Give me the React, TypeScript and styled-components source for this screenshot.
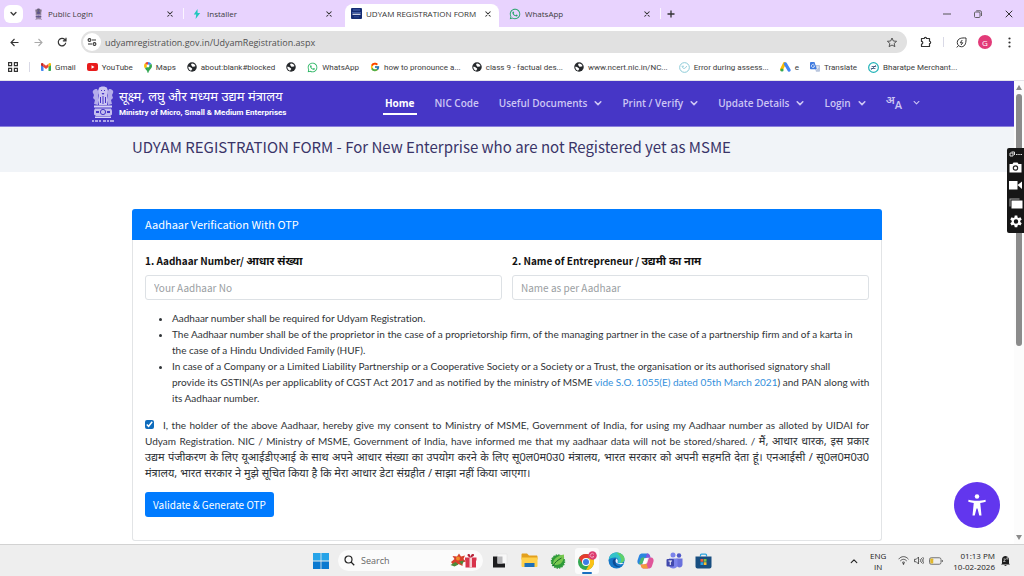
import React from "react";
import styled, { createGlobalStyle, css } from "styled-components";
import { FcGoogle } from "react-icons/fc";
import { FaWhatsapp } from "react-icons/fa";

const uiFont = `"Open Sans", "Noto Sans", sans-serif`;
const pageFont = `"Noto Sans CJK SC", "Noto Sans", sans-serif`;

const GlobalStyle = createGlobalStyle`
  *, *::before, *::after { box-sizing: border-box; }
  body { margin: 0; background: #fff; font-family: ${uiFont}; color: #3c3c3c; }
  button, input { font: inherit; color: inherit; }
  button { cursor: pointer; }
  a { color: inherit; text-decoration: none; }
  svg { display: block; flex: none; }
`;

const Screen = styled.div`
  min-height: 100vh;
  display: flex;
  flex-direction: column;
`;

/* ---------- browser chrome ---------- */

const TabStrip = styled.div`
  display: flex;
  align-items: center;
  height: 27px;
  padding-left: 4px;
  background: #e8d3fe;
`;

const PlainButton = styled.button`
  display: flex;
  align-items: center;
  justify-content: center;
  flex: none;
  padding: 0;
  border: 0;
  background: none;
`;

const TabSearch = styled(PlainButton)`
  width: 19px;
  height: 18px;
  margin-right: 4px;
  border-radius: 6px;
  background: #fff;
`;

const Tab = styled.div<{ $active?: boolean }>`
  display: flex;
  align-items: center;
  gap: 4px;
  flex: 0 1 154px;
  min-width: 0;
  height: 23px;
  margin-top: 4px;
  padding: 0 8px 4px 5px;
  font-size: 8px;
  border-radius: 8px 8px 0 0;
  ${(p) => p.$active && css`background: #fff; color: #333;`}
`;

const TabIcon = styled.span`
  display: flex;
  justify-content: center;
  flex: none;
  width: 12px;
`;

const TabTitle = styled.button`
  flex: 1;
  min-width: 0;
  padding: 0;
  border: 0;
  background: none;
  overflow: hidden;
  white-space: nowrap;
  text-align: left;
`;

const TabGap = styled.span<{ $line?: boolean }>`
  width: 3px;
  height: 11px;
  margin-left: 2px;
  border-left: 1px solid ${(p) => (p.$line ? "#fbf5ff" : "transparent")};
`;

const NewTab = styled(PlainButton)`
  width: 16px;
  height: 18px;
`;

const WindowButtons = styled.div`
  display: flex;
  margin-left: auto;
`;

const WindowButton = styled(PlainButton)`
  width: 31px;
  height: 26px;
`;

const Toolbar = styled.div`
  display: flex;
  align-items: center;
  height: 30px;
  padding: 0 3px 0 2px;
  background: #fff;
`;

const ToolButton = styled(PlainButton)`
  width: 24px;
  height: 22px;
`;

const AddressBar = styled.div`
  display: flex;
  align-items: center;
  flex: 1;
  height: 22px;
  margin: 0 7px;
  padding: 0 4px 0 2px;
  border-radius: 11px;
  background: #e1e1e1;
`;

const SiteInfo = styled(PlainButton)`
  width: 18px;
  height: 18px;
  border-radius: 9px;
  background: #fff;
`;

const AddressInput = styled.input`
  flex: 1;
  min-width: 0;
  padding: 0 4px;
  border: 0;
  outline: 0;
  background: none;
  font-size: 9px;
  color: #505050;
`;

const Divider = styled.span`
  width: 1px;
  height: 10px;
  background: #d9d9e6;
`;

const ToolDivider = styled(Divider)`
  margin: 0 5px;
`;

const Avatar = styled(PlainButton)`
  width: 14px;
  height: 14px;
  margin: 0 5px;
  border-radius: 7px;
  background: #e23a78;
  color: #fff;
  font-size: 8px;
`;

const BookmarkBar = styled.nav`
  display: flex;
  align-items: center;
  gap: 11px;
  height: 24px;
  padding: 0 8px 3px;
  border-bottom: 1px solid #e4e4ea;
  background: #fff;
  font-family: Roboto, sans-serif;
  font-size: 8px;
`;

const Bookmark = styled.a`
  display: flex;
  align-items: center;
  gap: 4px;
  white-space: nowrap;
`;

/* ---------- web page ---------- */

const Viewport = styled.div`
  position: relative;
  display: flex;
  flex: 1;
`;

const Page = styled.div`
  flex: 1;
  min-width: 0;
  display: flex;
  flex-direction: column;
  font-family: ${pageFont};
`;

const SiteHeader = styled.header`
  background: #4636c6;
  border-bottom: 1px solid #8a80dc;
`;

const HeaderInner = styled.div`
  display: flex;
  align-items: center;
  justify-content: space-between;
  max-width: 832px;
  height: 45px;
  margin: 0 auto;
`;

const Brand = styled.a`
  display: flex;
  align-items: center;
  gap: 4px;
  color: #fff;
`;

const BrandText = styled.span`
  display: flex;
  flex-direction: column;
  white-space: nowrap;
`;

const BrandHindi = styled.span`
  font-family: "Noto Sans", sans-serif;
  font-size: 13px;
  line-height: 18px;
`;

const BrandEnglish = styled.span`
  font-family: Roboto, sans-serif;
  font-size: 8px;
  font-weight: 700;
  line-height: 16px;
`;

const Nav = styled.nav`
  display: flex;
  align-items: center;
  gap: 16px;
  padding-right: 1px;
  font-family: ${uiFont};
  font-size: 10px;
  font-weight: 600;
`;

const NavLink = styled.a<{ $active?: boolean }>`
  display: flex;
  align-items: center;
  gap: 7px;
  height: 22px;
  padding: 0 2px;
  color: ${(p) => (p.$active ? "#fff" : "#cdc6f4")};
  font-weight: ${(p) => (p.$active ? 700 : 600)};
  white-space: nowrap;
  border-bottom: 2px solid ${(p) => (p.$active ? "#fff" : "transparent")};
`;

const LanguageMark = styled.span`
  display: flex;
  align-items: flex-end;
  height: 16px;
  margin-right: 4px;
  font-size: 11px;
  line-height: 12px;
`;

const LanguageHindi = styled.span`
  align-self: flex-start;
  line-height: 10px;
`;

const TitleBand = styled.div`
  background: #f1f4f8;
`;

const Container = styled.div`
  max-width: 750px;
  margin: 0 auto;
`;

const PageTitle = styled.h1`
  margin: 0;
  padding-bottom: 6px;
  font-size: 15px;
  font-weight: 400;
  line-height: 39px;
  color: #3a3468;
`;

const Main = styled.main`
  flex: 1;
  padding: 37px 0 2px;
`;

const Card = styled.section`
  border-radius: 3px;
`;

const CardHeader = styled.h2`
  margin: 0;
  padding: 0 13px;
  border-radius: 3px 3px 0 0;
  font-size: 11px;
  font-weight: 400;
  line-height: 31px;
  background: #007bff;
  color: #fff;
`;

const CardBody = styled.form`
  padding: 13px 12px 23px;
  border: 1px solid #e2e4e6;
  border-top: 0;
  border-radius: 0 0 3px 3px;
  font-size: 10px;
  line-height: 16px;
  color: #2f3337;
`;

const Fields = styled.div`
  display: grid;
  grid-template-columns: 1fr 1fr;
  gap: 10px;
`;

const Field = styled.div`
  display: flex;
  flex-direction: column;
  gap: 6px;
`;

const Label = styled.label`
  font-weight: 700;
  line-height: 16px;
  color: #111;
`;

const Hindi = styled.span`
  font-family: "Noto Sans", sans-serif;
  font-size: 11px;
`;

const TextInput = styled.input`
  width: 100%;
  height: 25px;
  padding: 0 8px;
  border: 1px solid #dde1e5;
  border-radius: 3px;
  background: #fff;
  &::placeholder { color: #9a9ea2; opacity: 1; }
`;

const Notes = styled.ul`
  margin: 10px -5px 11px 0;
  padding: 0 0 0 27px;
  font-family: Lato, sans-serif;
  font-variant-ligatures: none;
`;

const NoteLink = styled.a`
  color: #3490dc;
`;

const Consent = styled.label`
  display: block;
  font-family: Lato, sans-serif;
  font-variant-ligatures: none;
  text-align: justify;
`;

const Check = styled.input`
  width: 9px;
  height: 9px;
  margin: 0 9px 0 0;
  accent-color: #0f6cbd;
`;

const Submit = styled.button`
  display: block;
  height: 25px;
  margin-top: 11px;
  padding: 0 8px;
  border: 0;
  border-radius: 3px;
  background: #007bff;
  color: #fff;
`;

const ScrollTrack = styled.div`
  display: flex;
  flex-direction: column;
  align-items: center;
  justify-content: space-between;
  width: 10px;
  padding: 4px 0;
  background: #fcfcfc;
`;

const ScrollThumb = styled.div`
  width: 6px;
  height: 252px;
  margin: 4px 0 auto;
  border-radius: 3px;
  background: #8b8b8b;
`;

const CapturePanel = styled.div`
  position: absolute;
  top: 67px;
  right: 0;
  display: flex;
  flex-direction: column;
  align-items: center;
  gap: 5px;
  width: 17px;
  padding: 3px 0 4px;
  border-radius: 2px 0 0 2px;
  background: #161616;
`;

const AccessButton = styled(PlainButton)`
  position: absolute;
  right: 24px;
  bottom: 16px;
  width: 46px;
  height: 46px;
  border-radius: 50%;
  background: #6236ee;
`;

/* ---------- taskbar ---------- */

const Taskbar = styled.footer`
  display: grid;
  grid-template-columns: 1fr auto 1fr;
  align-items: center;
  height: 32px;
  border-top: 1px solid #d2d2d2;
  background: #eeeeee;
`;

const TaskIcons = styled.div`
  grid-column: 2;
  display: flex;
  align-items: center;
  gap: 5px;
`;

const TaskButton = styled(PlainButton)<{ $active?: boolean }>`
  position: relative;
  width: 24px;
  height: 26px;
  border-radius: 3px;
  ${(p) =>
    p.$active &&
    css`
      background: #fbfbfb;
      &::after {
        content: "";
        position: absolute;
        bottom: 0;
        left: 7px;
        right: 7px;
        height: 2px;
        border-radius: 1px;
        background: #1a6fc0;
      }
    `}
`;

const SearchBox = styled.label`
  display: flex;
  align-items: center;
  gap: 6px;
  width: 145px;
  height: 21px;
  padding: 0 6px;
  border-radius: 11px;
  background: #fbfbfb;
`;

const SearchInput = styled.input`
  flex: 1;
  min-width: 0;
  padding: 0;
  border: 0;
  outline: 0;
  background: none;
  font-size: 9px;
  &::placeholder { color: #666; opacity: 1; }
`;

const Tray = styled.div`
  display: flex;
  align-items: center;
  justify-content: flex-end;
  padding-right: 14px;
  font-size: 8px;
  line-height: 11px;
  color: #222;
`;

const Language = styled.div`
  margin: 0 12px;
  text-align: center;
`;

const Status = styled.div`
  display: flex;
  align-items: center;
  gap: 5px;
`;

const Clock = styled.time`
  margin: 0 6px 0 10px;
  text-align: right;
`;

/* ---------- icons ---------- */

const Chevron = ({ size = 8, up = false, w = 2 }: { size?: number; up?: boolean; w?: number }) => (
  <svg width={size} height={size} viewBox="0 0 10 10" fill="none" stroke="currentColor" strokeWidth={w} strokeLinecap="round" strokeLinejoin="round">
    <path d={up ? "M1.5 7 5 3.5 8.500 7" : "M1.500 3.500 5 7 8.500 3.500"} />
  </svg>
);

const Cross = ({ size = 7, w = 1.4 }: { size?: number; w?: number }) => (
  <svg width={size} height={size} viewBox="0 0 8 8" stroke="#333" strokeWidth={w} strokeLinecap="round">
    <path d="M1 1l6 6M7 1 1 7" />
  </svg>
);

const Emblem = ({ width, height, color }: { width: number; height: number; color: string }) => (
  <svg width={width} height={height} viewBox="0 0 24 38" fill={color}>
    <path d="M8 3c1-2 7-2 8 0l1 3-1 3 1 6-1 5H8l-1-5 1-6-1-3z" opacity=".9" />
    <path d="M6 4c-3 0-5 2-4 4l1 2-1 3 2 2-1 4 4 1V11l1-3z" opacity=".75" />
    <path d="M18 4c3 0 5 2 4 4l-1 2 1 3-2 2 1 4-4 1V11l-1-3z" opacity=".75" />
    <path d="M10 5h1v1h-1zM13 5h1v1h-1zM10.500 8h3l-1.500 2zM9 12h1v6H9zM14 12h1v6h-1zM11.500 11h1v8h-1z" fill="#4636c6" />
    <path d="M3 20.500h18v2H3zM4 31.500h16v1.500H4z" />
    <path d="M4 23.500h16l1 2v4l-2 1.500H5L3 29.500v-4z" opacity=".85" />
    <circle cx="12" cy="27" r="2.600" fill="none" stroke="#4636c6" strokeWidth="1" />
    <path d="M5 26h3v2H5zM16 26h3v2h-3z" fill="#4636c6" />
    <path d="M1 36h2M4 36h3M8 36h2M12 36h3M16 36h2M19 36h4" stroke={color} strokeWidth="1.800" opacity=".7" />
  </svg>
);

const Bolt = () => (
  <svg width="8" height="10" viewBox="0 0 8 10"><path d="M4.500 0 .8 5.500h2.400L2.600 10 7.200 3.900H4.600z" fill="#22c7bd" /></svg>
);

const MsmeIcon = () => (
  <svg width="11" height="11" viewBox="0 0 11 11">
    <rect width="11" height="11" rx="1" fill="#152c72" />
    <path d="M2 2h7M1 4.700h9" stroke="#5b79c4" strokeWidth=".8" />
    <path d="M1.500 6.300h8" stroke="#e8ecf8" strokeWidth="1.100" />
    <path d="M3 8.800h5" stroke="#3b57a5" strokeWidth=".7" />
  </svg>
);

const Globe = () => (
  <svg width="10" height="10" viewBox="0 0 20 20">
    <circle cx="10" cy="10" r="9.500" fill="#25282b" />
    <path d="M2.500 9.500c2.500-.3 4.500.3 5.500 1.800.8 1.300 2.600.9 2.400 2.800-.1 1.300-1.600 1.400-2.100 3.300C4.800 16.600 2.400 13.200 2.500 9.500zM10.500 3c2.300.2 4.300 1.400 5.500 3.200 1.400 2.300.6 3-1.600 2.900-1.700-.1-2 .9-3.400.4-1.300-.5-.7-1.700-2-2.300C7.600 6.500 8 3.200 10.500 3z" fill="#fff" />
  </svg>
);

const GridIcon = () => (
  <svg width="10" height="10" viewBox="0 0 10 10" fill="none" stroke="#333" strokeWidth="1.200">
    <path d="M.6.600h3v3h-3zM6.400.600h3v3h-3zM.6 6.400h3v3h-3zM6.400 6.400h3v3h-3z" />
  </svg>
);

const Gmail = () => (
  <svg width="10" height="8" viewBox="0 0 20 16">
    <path d="M0 3v11.500C0 15.300.7 16 1.500 16H5V6z" fill="#4285f4" />
    <path d="M20 3v11.500c0 .8-.7 1.500-1.500 1.500H15V6z" fill="#34a853" />
    <path d="M5 1.500V8l5 4 5-4V1.500l-5 4z" fill="#ea4335" />
    <path d="M0 2.500v2L5 8V1.600L3.600.6C2-.5 0 .6 0 2.500z" fill="#c5221f" />
    <path d="M20 2.500v2L15 8V1.600L16.400.6C18-.5 20 .6 20 2.500z" fill="#fbbc04" />
  </svg>
);

const YouTube = () => (
  <svg width="11" height="8" viewBox="0 0 22 16"><rect width="22" height="16" rx="4" fill="#e81c1c" /><path d="M9 4.500v7l6-3.500z" fill="#fff" /></svg>
);

const MapPin = () => (
  <svg width="8" height="11" viewBox="0 0 16 22">
    <path d="M8 0a8 8 0 0 0-6 2.700L8 8z" fill="#ea4335" />
    <path d="M8 0v8l6.500-4.500A8 8 0 0 0 8 0z" fill="#4285f4" />
    <path d="M2 2.700C-.8 6-.3 10 2 13l6-5z" fill="#fbbc04" />
    <path d="M14.500 3.500 2 13c3 3.500 4.500 5 5.300 8.400.2.800 1.200.8 1.400 0C10 16 16 13.500 16 8c0-1.700-.6-3.200-1.500-4.500z" fill="#34a853" />
    <circle cx="8" cy="8" r="2.800" fill="#fff" />
  </svg>
);

const RoundMark = ({ color }: { color: string }) => (
  <svg width="11" height="11" viewBox="0 0 22 22" fill="none">
    <circle cx="11" cy="11" r="9.700" stroke={color} strokeWidth="2" />
    <path d="M6 8.500h3M7 11c2 3 5 3 8-2" stroke={color} strokeWidth="2" strokeLinecap="round" />
  </svg>
);

const BharatPe = () => (
  <svg width="11" height="11" viewBox="0 0 22 22" fill="none">
    <circle cx="11" cy="11" r="9.700" stroke="#22b3b8" strokeWidth="2.400" />
    <path d="M8 9h7.500M6.500 13H14M15 7l-8 8" stroke="#274a72" strokeWidth="1.500" strokeLinecap="round" />
  </svg>
);

const Ads = () => (
  <svg width="11" height="10" viewBox="0 0 22 20">
    <path d="M9 3 3 15" stroke="#fbbc04" strokeWidth="6" strokeLinecap="round" />
    <path d="m11 4 7 12" stroke="#4285f4" strokeWidth="6.500" strokeLinecap="round" />
    <circle cx="4" cy="16" r="3.200" fill="#34a853" />
  </svg>
);

const TranslateIcon = () => (
  <svg width="10" height="10" viewBox="0 0 20 20">
    <path d="M8 6h10.500c.8 0 1.500.7 1.500 1.500V18c0 .8-.7 1.500-1.500 1.500H12z" fill="#b9c6de" />
    <path d="M1.500 0H9l4.500 14.500H1.500C.7 14.500 0 13.800 0 13V1.500C0 .7.7 0 1.500 0z" fill="#3f7be0" />
    <path d="M8.800 6.200A3.200 3.200 0 1 0 9.200 8H6.500M13 10h5M15.500 9v1.500c0 2-1.500 4-3 5" stroke="#fff" strokeWidth="1.300" fill="none" />
  </svg>
);

const PanelHandle = () => (
  <svg width="13" height="6" viewBox="0 0 26 12" fill="none" stroke="#ddd" strokeWidth="2">
    <path d="M2 4h6v6H2zM5 2h6v6M14 7h3M18.500 7h3M23 7h3" />
  </svg>
);

/* ---------- data ---------- */

const tabs = [
  { title: "Public Login", icon: <Emblem width={9} height={12} color="#5c5560" />, divider: true },
  { title: "Installer", icon: <Bolt /> },
  { title: "UDYAM REGISTRATION FORM", icon: <MsmeIcon />, active: true },
  { title: "WhatsApp", icon: <FaWhatsapp size={12} color="#25a56a" />, divider: true },
];

const bookmarks = [
  { icon: <Gmail />, text: "Gmail" },
  { icon: <YouTube />, text: "YouTube" },
  { icon: <MapPin />, text: "Maps" },
  { icon: <Globe />, text: "about:blank#blocked" },
  { icon: <Globe />, text: "" },
  { icon: <FaWhatsapp size={11} color="#25b35f" />, text: "WhatsApp" },
  { icon: <FcGoogle size={10} />, text: "how to pronounce a..." },
  { icon: <Globe />, text: "class 9 - factual des..." },
  { icon: <Globe />, text: "www.ncert.nic.in/NC..." },
  { icon: <RoundMark color="#8ccbd8" />, text: "Error during assess..." },
  { icon: <Ads />, text: "e" },
  { icon: <TranslateIcon />, text: "Translate" },
  { icon: <BharatPe />, text: "Bharatpe Merchant..." },
];

const navItems = [
  { text: "Home", active: true },
  { text: "NIC Code" },
  { text: "Useful Documents", menu: true },
  { text: "Print / Verify", menu: true },
  { text: "Update Details", menu: true },
  { text: "Login", menu: true },
];

function BrowserChrome() {
  return (
    <>
      <TabStrip>
        <TabSearch aria-label="Search tabs"><Chevron size={7} /></TabSearch>
        {tabs.map((t) => (
          <React.Fragment key={t.title}>
            <Tab $active={t.active}>
              <TabIcon>{t.icon}</TabIcon>
              <TabTitle>{t.title}</TabTitle>
              <PlainButton aria-label="Close tab"><Cross size={6} /></PlainButton>
            </Tab>
            <TabGap $line={t.divider} />
          </React.Fragment>
        ))}
        <NewTab aria-label="New tab">
          <svg width="8" height="8" viewBox="0 0 8 8" stroke="#333" strokeWidth="1.300"><path d="M4 .5v7M.5 4h7" /></svg>
        </NewTab>
        <WindowButtons>
          <WindowButton aria-label="Minimize"><svg width="8" height="8" viewBox="0 0 8 8"><path d="M0 4h8" stroke="#555" /></svg></WindowButton>
          <WindowButton aria-label="Restore">
            <svg width="8" height="8" viewBox="0 0 16 16" fill="none" stroke="#555" strokeWidth="1.800"><rect x="1" y="4" width="11" height="11" rx="2" /><path d="M4.500 1.500H12a3 3 0 0 1 3 3V12" /></svg>
          </WindowButton>
          <WindowButton aria-label="Close"><Cross size={8} w={1} /></WindowButton>
        </WindowButtons>
      </TabStrip>
      <Toolbar>
        <ToolButton aria-label="Back">
          <svg width="9" height="9" viewBox="0 0 18 18" fill="none" stroke="#333" strokeWidth="2.200"><path d="M17 9H2M9 2 2 9l7 7" /></svg>
        </ToolButton>
        <ToolButton aria-label="Forward">
          <svg width="9" height="9" viewBox="0 0 18 18" fill="none" stroke="#aaa" strokeWidth="2.200"><path d="M1 9h15M9 2l7 7-7 7" /></svg>
        </ToolButton>
        <ToolButton aria-label="Reload">
          <svg width="10" height="10" viewBox="0 0 20 20" fill="none" stroke="#333" strokeWidth="2.400"><path d="M17.500 11.500A7.500 7.500 0 1 1 15.500 5L18 7.500M18 1.500v6.300h-6.300" /></svg>
        </ToolButton>
        <AddressBar>
          <SiteInfo aria-label="Site information">
            <svg width="10" height="8" viewBox="0 0 20 16" fill="none" stroke="#333" strokeWidth="2.200"><circle cx="5" cy="4" r="2.800" /><path d="M10 4h8M2 12h8" /><circle cx="15" cy="12" r="2.800" /></svg>
          </SiteInfo>
          <AddressInput aria-label="Address" defaultValue="udyamregistration.gov.in/UdyamRegistration.aspx" />
          <PlainButton aria-label="Bookmark this page">
            <svg width="22" height="11" viewBox="0 0 44 22" fill="none" stroke="#444" strokeWidth="1.800" strokeLinejoin="round"><path d="m22 2 2.700 6 6.500.6-4.900 4.300 1.500 6.400L22 16l-5.800 3.300 1.500-6.400-4.900-4.300 6.500-.6z" /></svg>
          </PlainButton>
        </AddressBar>
        <ToolButton aria-label="Extensions">
          <svg width="12" height="12" viewBox="0 0 24 24" fill="none" stroke="#333" strokeWidth="2.400" strokeLinejoin="round"><path d="M3 5h5.500a2.300 2.300 0 0 1 4.600 0H19v5.500a2.300 2.300 0 0 1 0 4.600V21H3v-5a2.600 2.600 0 0 0 0-5.200z" /></svg>
        </ToolButton>
        <ToolDivider />
        <ToolButton aria-label="Performance">
          <svg width="11" height="11" viewBox="0 0 22 22" fill="none" stroke="#333" strokeWidth="2"><path d="M20 2c-8-.5-17 0-17.500 9 0 5 4 8.500 8.500 8.500C19 19.500 20.500 10 20 2zM1.500 21 5 17" /><path d="m12.500 6-4 5.500h5L10 16" /></svg>
        </ToolButton>
        <Avatar aria-label="Profile">G</Avatar>
        <ToolButton aria-label="Menu">
          <svg width="3" height="11" viewBox="0 0 3 11" fill="#333"><circle cx="1.500" cy="1.500" r="1.100" /><circle cx="1.500" cy="5.500" r="1.100" /><circle cx="1.500" cy="9.500" r="1.100" /></svg>
        </ToolButton>
      </Toolbar>
      <BookmarkBar aria-label="Bookmarks">
        <PlainButton aria-label="Apps"><GridIcon /></PlainButton>
        <Divider />
        {bookmarks.map((b, i) => (
          <Bookmark href="#" key={i} aria-label={b.text || "Bookmark"}>
            {b.icon}
            {b.text && <span>{b.text}</span>}
          </Bookmark>
        ))}
      </BookmarkBar>
    </>
  );
}

function WebPage() {
  return (
    <Page>
      <SiteHeader>
        <HeaderInner>
          <Brand href="#">
            <Emblem width={24} height={38} color="#d9d5f6" />
            <BrandText>
              <BrandHindi>सूक्ष्म, लघु और मध्यम उद्यम मंत्रालय</BrandHindi>
              <BrandEnglish>Ministry of Micro, Small &amp; Medium Enterprises</BrandEnglish>
            </BrandText>
          </Brand>
          <Nav>
            {navItems.map((n) => (
              <NavLink href="#" key={n.text} $active={n.active}>
                {n.text}
                {n.menu && <Chevron />}
              </NavLink>
            ))}
            <NavLink href="#" aria-label="Language">
              <LanguageMark><LanguageHindi>अ</LanguageHindi>A</LanguageMark>
              <Chevron size={7} w={1.5} />
            </NavLink>
          </Nav>
        </HeaderInner>
      </SiteHeader>
      <TitleBand>
        <Container>
          <PageTitle>UDYAM REGISTRATION FORM - For New Enterprise who are not Registered yet as MSME</PageTitle>
        </Container>
      </TitleBand>
      <Main>
        <Container>
          <Card>
            <CardHeader>Aadhaar Verification With OTP</CardHeader>
            <CardBody onSubmit={(e: React.FormEvent) => e.preventDefault()}>
              <Fields>
                <Field>
                  <Label htmlFor="aadhaar">1. Aadhaar Number/ <Hindi>आधार संख्या</Hindi></Label>
                  <TextInput id="aadhaar" placeholder="Your Aadhaar No" />
                </Field>
                <Field>
                  <Label htmlFor="name">2. Name of Entrepreneur / <Hindi>उद्यमी का नाम</Hindi></Label>
                  <TextInput id="name" placeholder="Name as per Aadhaar" />
                </Field>
              </Fields>
              <Notes>
                <li>Aadhaar number shall be required for Udyam Registration.</li>
                <li>
                  The Aadhaar number shall be of the proprietor in the case of a proprietorship firm, of the managing
                  partner in the case of a partnership firm and of a karta in the&nbsp;case of a Hindu Undivided Family
                  (HUF).
                </li>
                <li>
                  In case of a Company or a Limited Liability Partnership or a Cooperative Society or a Society or a
                  Trust, the organisation or its authorised signatory shall provide&nbsp;its GSTIN(As per applicablity
                  of CGST Act 2017 and as notified by the ministry of MSME{" "}
                  <NoteLink href="#">vide S.O. 1055(E) dated 05th March 2021</NoteLink>) and PAN along with its Aadhaar
                  number.
                </li>
              </Notes>
              <Consent>
                <Check type="checkbox" defaultChecked />
                I, the holder of the above Aadhaar, hereby give my consent to Ministry of MSME, Government of India, for
                using my Aadhaar number as alloted by UIDAI for Udyam Registration. NIC / Ministry of MSME, Government of
                India, have informed me that my aadhaar data will not be stored/shared. /{" "}
                <Hindi>
                  मैं, आधार धारक, इस प्रकार उद्यम&nbsp;पंजीकरण के लिए यूआईडीएआई के साथ अपने आधार संख्या का उपयोग करने के लिए
                  सू0ल0म0उ0 मंत्रालय, भारत सरकार को अपनी सहमति देता हूं। एनआईसी / सू0ल0म0उ0 मंत्रालय, भारत सरकार ने मुझे
                  सूचित किया है कि मेरा आधार डेटा संग्रहीत / साझा नहीं किया जाएगा।
                </Hindi>
              </Consent>
              <Submit>Validate &amp; Generate OTP</Submit>
            </CardBody>
          </Card>
        </Container>
      </Main>
    </Page>
  );
}

function CaptureTools() {
  return (
    <CapturePanel>
      <PanelHandle />
      <PlainButton aria-label="Take photo">
        <svg width="13" height="11" viewBox="0 0 26 22"><path d="M1 4h6l2-3h8l2 3h6v17H1z" fill="#fff" /><circle cx="13" cy="12" r="5.500" fill="#222" /><circle cx="13" cy="12" r="3.200" fill="#fff" /></svg>
      </PlainButton>
      <PlainButton aria-label="Record video">
        <svg width="13" height="14" viewBox="0 0 26 28"><path d="M0 6h17v17H0zM17 14l9-7v15z" fill="#fff" /></svg>
      </PlainButton>
      <PlainButton aria-label="Gallery">
        <svg width="14" height="13" viewBox="0 0 28 26"><path d="M1 3h20v2H3v14H1z" fill="#aaa" /><path d="M5 7h22v16H5z" fill="#fff" /></svg>
      </PlainButton>
      <PlainButton aria-label="Settings">
        <svg width="14" height="14" viewBox="0 0 24 24" fill="#fff"><path fillRule="evenodd" d="m9.800 1-.5 3.100-1.900 1.100-3-1.200-2.200 3.900 2.500 1.900v2.300l-2.500 2 2.200 3.900 3-1.200 1.900 1.100.5 3.100h4.400l.5-3.100 1.900-1.100 3 1.200 2.200-3.900-2.500-2V9.800l2.500-1.900L19.600 4l-3 1.200-1.900-1.100-.5-3.100zM12 7.200a3.800 3.800 0 1 1 0 7.600 3.800 3.800 0 0 1 0-7.600z" /></svg>
      </PlainButton>
    </CapturePanel>
  );
}

function WindowsTaskbar() {
  return (
    <Taskbar>
      <TaskIcons>
        <TaskButton aria-label="Start">
          <svg width="16" height="16" viewBox="0 0 16 16"><path d="M0 0h7.600v7.600H0zM8.400 0H16v7.600H8.400z" fill="#26a3e8" /><path d="M0 8.400h7.600V16H0zM8.400 8.400H16V16H8.400z" fill="#0b79d0" /></svg>
        </TaskButton>
        <SearchBox>
          <svg width="11" height="11" viewBox="0 0 22 22" fill="none" stroke="#222" strokeWidth="2.400"><circle cx="9" cy="9" r="7" /><path d="m14 14 6.500 6.500" /></svg>
          <SearchInput placeholder="Search" aria-label="Search" />
          <svg width="27" height="15" viewBox="0 0 54 30">
            <path d="M2 18 9 12 5 6l9 1 4-6 4 6 8-2-3 7 5 5-7 2v7l-8-4-9 4z" fill="#d8402c" />
            <path d="m1 24 10-6 6 5-8 4zM18 17l10-2-4 9z" fill="#4d8a3a" />
            <circle cx="16" cy="11" r="4" fill="#f08a2a" />
            <path d="M30 9h23v6H30zM31 15h21v14H31z" fill="#d8344c" />
            <path d="M39 9h5v20h-5z" fill="#f5cdd2" />
            <path d="M41 9c-8-2-7-8-3-7 2 0 3 4 3 7 0-3 2-8 5-7 3 0 4 5-5 7z" fill="#b52238" />
          </svg>
        </SearchBox>
        <TaskButton aria-label="Task view">
          <svg width="16" height="16" viewBox="0 0 32 32"><path d="M10 2h20v20H10z" fill="#f8f8f8" stroke="#ddd" /><path d="M2 7h9v14h15v8H2z" fill="#1d1d1f" /><path d="M11 7h10v14H11z" fill="#b9b9bb" /></svg>
        </TaskButton>
        <TaskButton aria-label="File Explorer">
          <svg width="17" height="15" viewBox="0 0 34 30"><path d="M1 3c0-1 1-2 2-2h9l4 4h15c1 0 2 1 2 2v6H1z" fill="#e3a01c" /><path d="M1 9h32v17c0 1-1 2-2 2H3c-1 0-2-1-2-2z" fill="#ffd04a" /><path d="M7 20h20v8H7z" fill="#1d6fb8" /></svg>
        </TaskButton>
        <TaskButton aria-label="Leaf app">
          <svg width="16" height="16" viewBox="0 0 32 32"><circle cx="16" cy="17" r="13" fill="#2f9a3a" stroke="#2f9a3a" strokeWidth="3" strokeDasharray="3 2" /><path d="M6 23C6 11 15 6 28 3c1 12-6 22-18 21z" fill="#78c850" /><path d="M6 26c4-8 10-12 17-16" stroke="#17672a" strokeWidth="2" fill="none" /></svg>
        </TaskButton>
        <TaskButton $active aria-label="Chrome">
          <svg width="20" height="20" viewBox="0 0 40 40">
            <circle cx="18" cy="22" r="16" fill="#34a853" />
            <path d="M4.100 14A16 16 0 0 1 31.900 14L18 14l-7 12z" fill="#e53b2e" />
            <path d="M31.900 14A16 16 0 0 1 18 38l7-12a8 8 0 0 0 0-8l-2-4z" fill="#fbc116" />
            <circle cx="18" cy="22" r="8" fill="#fff" /><circle cx="18" cy="22" r="6" fill="#3b7de8" />
            <circle cx="31" cy="9" r="8.500" fill="#dc3c70" /><path d="M34 7a4 4 0 1 0 0 4h-3" stroke="#f6b6cb" strokeWidth="1.500" fill="none" />
          </svg>
        </TaskButton>
        <TaskButton aria-label="Edge">
          <svg width="17" height="17" viewBox="0 0 34 34">
            <circle cx="17" cy="17" r="16" fill="#1577c8" />
            <path d="M1.500 15C3 6 9 1 17 1c9 0 16 6 16 13 0 5-4 8-9 8-3 0-5-1-4-3 2-3-1-8-6-8-6 0-11 2-12.500 4z" fill="#35c4c9" />
            <path d="M17 1c9 0 16 6 16 13 0 5-4 8-9 8 4-4 3-12-7-21z" fill="#5fd06a" />
            <path d="M14 13c-4 1-6 5-4 10 2 6 9 9 16 6-5 1-11-2-11-7 0-3 2-4 1-6 0-2-1-3-2-3z" fill="#0c4b93" />
            <path d="M16 13c3 1 5 4 3 7 0 1 1 3 6 2h7c-2 2-5 3-9 2-5-1-8-3-8-6 0-2 1-3 1-5z" fill="#eef" />
          </svg>
        </TaskButton>
        <TaskButton aria-label="Copilot">
          <svg width="17" height="16" viewBox="0 0 34 32">
            <path d="M12 1h9c3 0 4 2 5 5l1 3h-7l-6 2-4 12H6c-4 0-6-4-5-8L4 6c1-4 4-5 8-5z" fill="#2a86e0" />
            <path d="M8 10 4 22c3 2 6 1 8-4l3-10z" fill="#4cb96a" />
            <path d="M22 31h-9c-3 0-4-2-5-5l-1-3h7l6-2 4-12h4c4 0 6 4 5 8l-3 9c-1 4-4 5-8 5z" fill="#e0569a" />
            <path d="M22 31h-9c-3 0-4-2-5-5l-1-3h7l5-2z" fill="#f39a3c" />
            <path d="M20 1c4 0 5 3 7 8h-7l-3 3z" fill="#8b55dc" />
            <path d="m15 11 6-1-3 11-6 1z" fill="#fff" />
          </svg>
        </TaskButton>
        <TaskButton aria-label="Teams">
          <svg width="17" height="17" viewBox="0 0 34 34">
            <circle cx="14" cy="6" r="5" fill="#7b83eb" /><circle cx="26" cy="7" r="4.500" fill="#5059c9" />
            <path d="M21 13h12v12c0 4-3 6-6 6s-6-2-6-6z" fill="#6a71dd" /><path d="M6 13h17v13c0 4-4 7-8 7s-9-2-9-7z" fill="#7b83eb" />
            <rect x="1" y="14" width="15" height="15" rx="2" fill="#4048ac" /><path d="M5 18h7M8.500 18v8" stroke="#fff" strokeWidth="2" />
          </svg>
        </TaskButton>
        <TaskButton aria-label="Store">
          <svg width="17" height="16" viewBox="0 0 34 32"><path d="M11 7V4c0-1 1-2 2-2h8c1 0 2 1 2 2v3" fill="none" stroke="#2aa5e0" strokeWidth="2.500" /><path d="M1 7h32v20c0 2-2 4-4 4H5c-2 0-4-2-4-4z" fill="#184e80" /><path d="M11 12h5.500v5.500H11z" fill="#f05a3c" /><path d="M17.500 12H23v5.500h-5.500z" fill="#7fc241" /><path d="M11 18.500h5.500V24H11z" fill="#2aa5e8" /><path d="M17.500 18.500H23V24h-5.500z" fill="#fbc02d" /></svg>
        </TaskButton>
      </TaskIcons>
      <Tray>
        <PlainButton aria-label="Show hidden icons"><Chevron up w={1.4} /></PlainButton>
        <Language>ENG<br />IN</Language>
        <Status>
          <svg width="11" height="9" viewBox="0 0 22 18" fill="none" stroke="#333" strokeWidth="1.600"><path d="M1 6.500C7-.5 15-.5 21 6.500M4.500 10c4-4.500 9-4.500 13 0M8 13.500c2-2 4-2 6 0" /><circle cx="11" cy="15.500" r="1.200" fill="#333" /></svg>
          <svg width="10" height="9" viewBox="0 0 20 18" fill="none" stroke="#333" strokeWidth="1.500"><path d="M1 6.500h3.500L9 2v14l-4.500-4.500H1zM12 6c1.500 2 1.500 4 0 6M14.500 4c3 3 3 7 0 10M17 2c4 4 4 10 0 14" /></svg>
          <svg width="14" height="8" viewBox="0 0 28 16" fill="none"><rect x="1" y="1.500" width="23" height="13" rx="3.500" stroke="#555" strokeWidth="1.600" /><rect x="2.500" y="3" width="6" height="10" rx="1.500" fill="#e0b72c" /><path d="M26.500 6v4" stroke="#555" strokeWidth="2" /></svg>
        </Status>
        <Clock>01:13 PM<br />10-02-2026</Clock>
        <svg width="9" height="11" viewBox="0 0 18 22"><path d="M2 17V9c0-4 3-7 7-7s7 3 7 7v8l2 2H0z" fill="#1d1d1d" /><path d="M6 20h6l-3 2z" fill="#1d1d1d" /><path d="M5 8h4l-4 5h4M11 4h4l-4 4h4" stroke="#eee" strokeWidth="1.300" fill="none" /></svg>
      </Tray>
    </Taskbar>
  );
}

export default function App() {
  return (
    <Screen>
      <GlobalStyle />
      <BrowserChrome />
      <Viewport>
        <WebPage />
        <ScrollTrack>
          <svg width="6" height="5" viewBox="0 0 6 5"><path d="M3 0l3 5H0z" fill="#8b8b8b" /></svg>
          <ScrollThumb />
          <svg width="6" height="5" viewBox="0 0 6 5"><path d="M3 5 0 0h6z" fill="#8b8b8b" /></svg>
        </ScrollTrack>
        <CaptureTools />
        <AccessButton aria-label="Accessibility options">
          <svg width="18" height="22" viewBox="0 0 36 44" fill="#fff"><circle cx="18" cy="5" r="4.500" /><path d="M1 11.500c6 1.500 11 2 17 2s11-.5 17-2l.5 4c-4 1.200-7.500 2-11 2.300L27 43h-4.500L19 29h-2l-3.500 14H9l2.500-25.200C8 17.500 4.500 16.700.5 15.500z" /></svg>
        </AccessButton>
      </Viewport>
      <WindowsTaskbar />
    </Screen>
  );
}
